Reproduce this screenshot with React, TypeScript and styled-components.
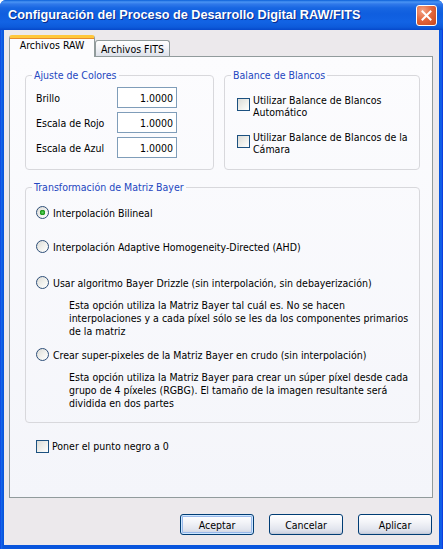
import React from "react";
import styled, { createGlobalStyle } from "styled-components";

const UI_FONT = `"DejaVu Sans Condensed", "Liberation Sans", sans-serif`;

const GlobalStyle = createGlobalStyle`
  html, body { margin: 0; padding: 0; background: #ffffff; }
  body { width: 443px; height: 549px; overflow: hidden; }
  *, *::before, *::after { box-sizing: border-box; }
`;

const Window = styled.div`
  width: 443px;
  height: 549px;
  display: flex;
  flex-direction: column;
  background: linear-gradient(90deg, #0831d9 0px, #166aee 1px, #0855dd 3px, #0855dd 440px, #166aee 441px, #0831d9 443px);
  border-radius: 6px 6px 0 0;
  overflow: hidden;
  font-family: ${UI_FONT};
  font-size: 10.5px;
  color: #000;
`;

const TitleBar = styled.div`
  height: 30px;
  flex: none;
  display: flex;
  align-items: center;
  justify-content: space-between;
  padding: 0 6px 0 8px;
  background: linear-gradient(
    180deg,
    #0a5fd8 0px,
    #4a94f4 2px,
    #3079ea 4px,
    #1766e2 8px,
    #0f5edf 14px,
    #1263e4 22px,
    #0d5bdb 27px,
    #0648ca 30px
  );
`;

const TitleText = styled.span`
  color: #ffffff;
  font-family: "Liberation Sans", sans-serif;
  font-weight: bold;
  font-size: 12.7px;
  text-shadow: 1px 1px 0 #0a2c8c;
  white-space: nowrap;
`;

const CloseButton = styled.div`
  width: 21px;
  height: 21px;
  border: 1px solid #ffffff;
  border-radius: 3px;
  background: radial-gradient(circle at 30% 25%, #f4a486 0%, #e4683e 45%, #c8461c 100%);
  display: flex;
  align-items: center;
  justify-content: center;
`;

const Body = styled.div`
  flex: 1;
  margin: 0 4px 4px 4px;
  background: #ece9ec;
  display: flex;
  flex-direction: column;
  padding: 5px 6px 0 5px;
`;

const TabStrip = styled.div`
  display: flex;
  align-items: flex-end;
  height: 21px;
  flex: none;
`;

const Tab = styled.div<{ $active?: boolean }>`
  position: relative;
  display: flex;
  align-items: center;
  justify-content: center;
  white-space: nowrap;
  border: 1px solid #919b9c;
  border-bottom: none;
  border-radius: 3px 3px 0 0;
  ${(p) =>
    p.$active
      ? `
    width: 86px;
    height: 22px;
    margin-bottom: -1px;
    z-index: 1;
    background: #fcfcfe;
    border-top: 3px solid #ffc83c;
    box-shadow: inset 0 1px 0 #e68b2c;
    padding-bottom: 6px;
  `
      : `
    width: 75px;
    height: 16px;
    background: linear-gradient(180deg, #ffffff 0%, #f1f2f6 50%, #dde1ea 100%);
    padding-top: 0px;
  `}
`;

const Panel = styled.div`
  height: 442px;
  flex: none;
  border: 1px solid #919b9c;
  background: linear-gradient(180deg, #fcfcfe 0%, #f4f5fa 100%);
  padding: 12px 12px 0 15px;
  display: flex;
  flex-direction: column;
`;

const TopRow = styled.div`
  display: grid;
  grid-template-columns: 189px 196px;
  column-gap: 10px;
`;

const Group = styled.fieldset<{ $mt?: number }>`
  margin: ${(p) => p.$mt ?? 0}px 0 0 0;
  padding: 0;
  min-width: 0;
  border: 1px solid #d8d8dc;
  border-radius: 4px;
`;

const Legend = styled.legend`
  margin-left: 6px;
  padding: 0 2px;
  color: #2447c0;
  font-size: 10.5px;
  line-height: 13px;
`;

const FieldGrid = styled.div`
  display: grid;
  grid-template-columns: 81px 60px;
  row-gap: 4px;
  align-items: center;
  padding: 5px 0 11px 10px;
`;

const FieldLabel = styled.span`
  white-space: nowrap;
`;

const NumberBox = styled.div`
  height: 21px;
  border: 1px solid #7f9db9;
  background: #ffffff;
  display: flex;
  align-items: center;
  justify-content: flex-end;
  padding-right: 3px;
`;

const CheckList = styled.div`
  display: flex;
  flex-direction: column;
  gap: 13px;
  padding: 12px 4px 14px 12px;
`;

const CheckItem = styled.div<{ $ml?: number; $mt?: number }>`
  display: flex;
  align-items: flex-start;
  gap: 3px;
  margin-left: ${(p) => p.$ml ?? 0}px;
  margin-top: ${(p) => p.$mt ?? 0}px;
  line-height: 12px;
`;

const CheckBox = styled.span<{ $offset?: number }>`
  flex: none;
  width: 13px;
  height: 13px;
  margin-top: ${(p) => p.$offset ?? 0}px;
  border: 1px solid #1c5180;
  background: linear-gradient(135deg, #dcdcd7 0%, #f2f2ee 60%, #ffffff 100%);
`;

const CheckText = styled.span`
  white-space: nowrap;
`;

const OptionList = styled.div`
  display: flex;
  flex-direction: column;
  padding: 12px 0 12px 10px;
`;

const RadioRow = styled.div<{ $mt: number }>`
  display: flex;
  align-items: center;
  gap: 4px;
  height: 13px;
  margin-top: ${(p) => p.$mt}px;
  white-space: nowrap;
`;

const Radio = styled.span<{ $checked?: boolean }>`
  flex: none;
  width: 13px;
  height: 13px;
  border-radius: 50%;
  border: 1px solid #2d4e78;
  background: ${(p) =>
    p.$checked
      ? "radial-gradient(circle, #5fd35f 0px, #21a121 2px, #1c8c1c 2.6px, rgba(255,255,255,0) 3px), linear-gradient(135deg, #dcdcd7 0%, #ffffff 100%)"
      : "linear-gradient(135deg, #dcdcd7 0%, #f4f4f0 60%, #ffffff 100%)"};
`;

const Description = styled.div`
  margin: 10px 0 0 33px;
  line-height: 13px;
  white-space: nowrap;
`;

const ButtonRow = styled.div`
  display: flex;
  justify-content: flex-end;
  gap: 15px;
  margin-top: 16px;
  padding-right: 1px;
`;

const Button = styled.div<{ $default?: boolean }>`
  width: 74px;
  height: 21px;
  border: 1px solid #003c74;
  border-radius: 3px;
  display: flex;
  align-items: center;
  justify-content: center;
  background: linear-gradient(180deg, #ffffff 0%, #f4f5f9 35%, #e2e5ee 75%, #c9cfdf 100%);
  box-shadow: ${(p) =>
    p.$default
      ? "inset 0 0 0 1px #cee7ff, inset 0 0 0 2px #98b8ea"
      : "inset 0 -1px 0 #c4cad8"};
`;

export default function App() {
  return (
    <>
      <GlobalStyle />
      <Window>
        <TitleBar>
          <TitleText>Configuración del Proceso de Desarrollo Digital RAW/FITS</TitleText>
          <CloseButton>
            <svg width="11" height="11" viewBox="0 0 11 11">
              <path d="M1.5 1.5 L9.5 9.5 M9.5 1.5 L1.5 9.5" stroke="#ffffff" strokeWidth="2" strokeLinecap="square" />
            </svg>
          </CloseButton>
        </TitleBar>
        <Body>
          <TabStrip>
            <Tab $active>Archivos RAW</Tab>
            <Tab>Archivos FITS</Tab>
          </TabStrip>
          <Panel>
            <TopRow>
              <Group>
                <Legend>Ajuste de Colores</Legend>
                <FieldGrid>
                  <FieldLabel>Brillo</FieldLabel>
                  <NumberBox>1.0000</NumberBox>
                  <FieldLabel>Escala de Rojo</FieldLabel>
                  <NumberBox>1.0000</NumberBox>
                  <FieldLabel>Escala de Azul</FieldLabel>
                  <NumberBox>1.0000</NumberBox>
                </FieldGrid>
              </Group>
              <Group>
                <Legend>Balance de Blancos</Legend>
                <CheckList>
                  <CheckItem>
                    <CheckBox $offset={4} />
                    <CheckText>
                      Utilizar Balance de Blancos
                      <br />
                      Automático
                    </CheckText>
                  </CheckItem>
                  <CheckItem>
                    <CheckBox $offset={4} />
                    <CheckText>
                      Utilizar Balance de Blancos de la
                      <br />
                      Cámara
                    </CheckText>
                  </CheckItem>
                </CheckList>
              </Group>
            </TopRow>
            <Group $mt={11}>
              <Legend>Transformación de Matriz Bayer</Legend>
              <OptionList>
                <RadioRow $mt={0}>
                  <Radio $checked />
                  Interpolación Bilineal
                </RadioRow>
                <RadioRow $mt={21}>
                  <Radio />
                  Interpolación Adaptive Homogeneity-Directed (AHD)
                </RadioRow>
                <RadioRow $mt={23}>
                  <Radio />
                  Usar algoritmo Bayer Drizzle (sin interpolación, sin debayerización)
                </RadioRow>
                <Description>
                  Esta opción utiliza la Matriz Bayer tal cuál es. No se hacen
                  <br />
                  interpolaciones y a cada píxel sólo se les da los componentes primarios
                  <br />
                  de la matriz
                </Description>
                <RadioRow $mt={10}>
                  <Radio />
                  Crear super-pixeles de la Matriz Bayer en crudo (sin interpolación)
                </RadioRow>
                <Description>
                  Esta opción utiliza la Matriz Bayer para crear un súper píxel desde cada
                  <br />
                  grupo de 4 píxeles (RGBG). El tamaño de la imagen resultante será
                  <br />
                  dividida en dos partes
                </Description>
              </OptionList>
            </Group>
            <CheckItem $ml={11} $mt={17}>
              <CheckBox $offset={0} />
              <CheckText>Poner el punto negro a 0</CheckText>
            </CheckItem>
          </Panel>
          <ButtonRow>
            <Button $default>Aceptar</Button>
            <Button>Cancelar</Button>
            <Button>Aplicar</Button>
          </ButtonRow>
        </Body>
      </Window>
    </>
  );
}
